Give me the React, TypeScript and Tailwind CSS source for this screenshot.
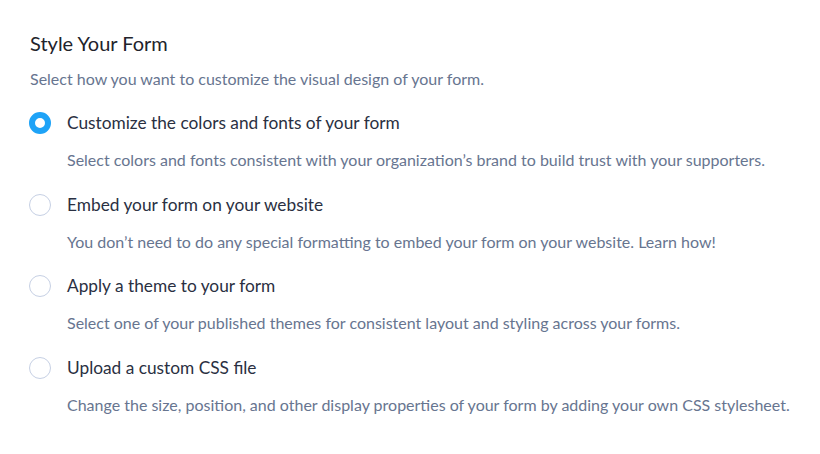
import React, { useState } from "react";

const options = [
  {
    id: "customize",
    label: "Customize the colors and fonts of your form",
    description:
      "Select colors and fonts consistent with your organization\u2019s brand to build trust with your supporters.",
  },
  {
    id: "embed",
    label: "Embed your form on your website",
    description:
      "You don\u2019t need to do any special formatting to embed your form on your website. Learn how!",
  },
  {
    id: "theme",
    label: "Apply a theme to your form",
    description:
      "Select one of your published themes for consistent layout and styling across your forms.",
  },
  {
    id: "css",
    label: "Upload a custom CSS file",
    description:
      "Change the size, position, and other display properties of your form by adding your own CSS stylesheet.",
  },
];

export default function App() {
  const [selected, setSelected] = useState("customize");

  return (
    <div className="w-[820px] h-[454px] bg-white px-[30px] pt-[29px] font-['Lato','Open_Sans',sans-serif]">
      <h2 className="text-[20px] leading-[28px] text-[#22232b]">Style Your Form</h2>
      <p className="mt-[12px] text-[16px] leading-[20px] text-[#677590]">
        Select how you want to customize the visual design of your form.
      </p>

      <div className="mt-[22px] flex flex-col gap-[22.7px]">
        {options.map((opt) => {
          const active = selected === opt.id;
          return (
            <div key={opt.id} className="flex flex-col">
              <label
                className="flex items-center gap-[16px] cursor-pointer -ml-px"
                onClick={() => setSelected(opt.id)}
              >
                <span
                  className={
                    active
                      ? "w-[22px] h-[22px] rounded-full border-[6px] border-[#1ea3f7] bg-white shrink-0"
                      : "w-[22px] h-[22px] rounded-full border border-[#c6d0e4] bg-white shrink-0"
                  }
                />
                <span className="text-[17.3px] leading-[24px] text-[#2a3042]">{opt.label}</span>
              </label>
              <p className="mt-[15px] ml-[37px] text-[16px] leading-[20px] text-[#677590]">
                {opt.description}
              </p>
            </div>
          );
        })}
      </div>
    </div>
  );
}
